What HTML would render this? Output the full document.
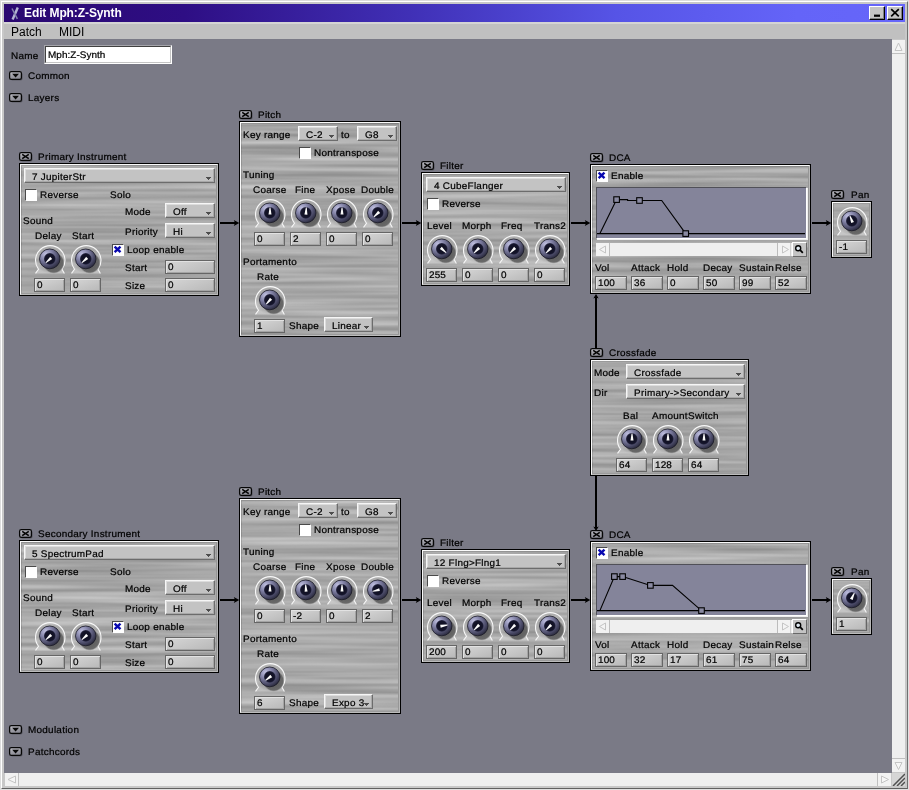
<!DOCTYPE html>
<html><head><meta charset="utf-8"><title>Edit Mph:Z-Synth</title>
<style>
html,body{margin:0;padding:0}
body{width:909px;height:790px;overflow:hidden;background:#c8c8c8;position:relative;font-family:"Liberation Sans",sans-serif;font-size:9.5px;color:#000}
#win{position:absolute;left:0;top:0;width:909px;height:790px;background:#c8c8c8;overflow:hidden}
#win:before{content:"";position:absolute;left:0;top:0;right:0;bottom:0;box-sizing:border-box;border:1px solid;border-color:#dcdcdc #e0e0e0 #e0e0e0 #dcdcdc}
#win:after{content:"";position:absolute;left:1px;top:1px;right:1px;bottom:1px;box-sizing:border-box;border:1px solid;border-color:#fff #707070 #606060 #fff}
#title{position:absolute;left:4px;top:4px;width:901px;height:18px;background:linear-gradient(90deg,#2a0870 0%,#2e0e84 20%,#4030b6 45%,#5654e6 68%,#6464f8 88%,#6666fa 100%)}
#title b{position:absolute;left:20px;top:2px;letter-spacing:-0.1px;font-size:12px;line-height:14px;color:#fff;white-space:nowrap}
.wb{position:absolute;top:2px;width:16px;height:14px;background:#c4c4c4;border:1px solid;border-color:#fff #000 #000 #fff;box-sizing:border-box;box-shadow:inset -1px -1px 0 #808080}
.wb svg{position:absolute;left:0;top:0}
#menu{position:absolute;left:4px;top:22px;width:901px;height:17px;background:#c0c0c0;border-top:2px solid #d4d4d4;box-sizing:border-box;font-size:12px}
#menu span{position:absolute;top:1px;line-height:14px}
#cv{position:absolute;left:4px;top:39px;width:888px;height:734px;background:#7a7a86}
#root{position:absolute;left:0;top:0;will-change:transform}
.t{margin-left:-0.6px}
#title b,#menu span{will-change:transform}
.t,.dd span,.fd span,#name span{position:absolute;white-space:nowrap;line-height:12px;font-size:9.5px;transform:scaleX(1.045);transform-origin:0 50%;letter-spacing:0.25px;text-rendering:geometricPrecision;-webkit-text-stroke:0.22px #000}
.xi,.kn,.ar{position:absolute;overflow:visible}
.pn{position:absolute;box-sizing:border-box;border:1px solid #000}
.pn:before{content:"";position:absolute;left:0;top:0;right:0;bottom:0;border:1px solid;border-color:#fafafa #b8b8b8 #bcbcbc #fafafa}
.pn:after{content:"";position:absolute;left:1px;top:1px;right:1px;bottom:1px;border:1px solid;border-color:rgba(0,0,0,.13) #969696 #9a9a9a rgba(0,0,0,.13)}
.dd{position:absolute;box-sizing:border-box;background:#c3c3c3;border:1px solid;border-color:#f6f6f6 #6c6c6c #6c6c6c #f6f6f6;box-shadow:inset -1px -1px 0 #a8a8a8,inset 1px 1px 0 #dcdcdc}
.dd span{top:3px}
.da{position:absolute;right:3px;bottom:2px}
.fd{position:absolute;box-sizing:border-box;background:linear-gradient(160deg,#d6d6d6,#c4c4c4 60%,#b8b8b8);border:1px solid #666;box-shadow:inset 1px 1px 0 #e2e2e2,inset -1px -1px 0 #a4a4a4}
.fd span{left:1.5px;top:1px;letter-spacing:0.1px}
.cb{position:absolute;box-sizing:border-box;width:12px;height:12px;background:#fff;border:1px solid;border-color:#4a4a4a #fff #fff #4a4a4a}
.cb svg{position:absolute;left:-1px;top:-1px}
.env{position:absolute;box-sizing:border-box;background:#84849a;border:1px solid;border-color:#505058 #fff #fff #505058;box-shadow:1px 1px 0 #f0f0f0}
.hs{position:absolute;height:13px;background:#efefef}
.sb{position:absolute;top:0;width:14px;height:13px;background:#f2f2f2;box-sizing:border-box}
.sb svg{position:absolute;left:0;top:0}
.sb.l{left:0;border-right:1px solid #bcbcbc} .sb.r{right:16px;border-left:1px solid #bcbcbc;border-right:1px solid #d0d0d0}
.zb{position:absolute;right:0px;top:-1px;width:15px;height:15px;box-sizing:border-box;background:#c4c4c4;border:1px solid;border-color:#fff #686868 #686868 #fff}
.zb svg{position:absolute;left:0px;top:0px}
#vs{position:absolute;left:892px;top:40px;width:13px;height:732px;background:#efefef}
#hsb{position:absolute;left:5px;top:773px;width:886px;height:13px;background:#efefef}
.sa{position:absolute;width:14px;height:14px;background:#f2f2f2;box-sizing:border-box}
.sa svg{position:absolute;left:0;top:0}
#vs .sa{width:13px} #hsb .sa{height:13px}
#grip{position:absolute;left:892px;top:773px;width:13px;height:13px;background:#d6d6d6}
#name{position:absolute;left:44px;top:45px;width:128px;height:19px;box-sizing:border-box;background:#fff;border:2px solid;border-color:#404040 #c4c4c4 #c4c4c4 #404040}
#name:before{content:"";position:absolute;left:-2px;top:-2px;right:-2px;bottom:-2px;border:1px solid;border-color:#a4a4aa #fff #fff #a4a4aa}
#name span{left:1.9px;top:3px;letter-spacing:0.05px}
</style></head><body>
<svg width="0" height="0" style="position:absolute"><defs>
<radialGradient id="kb" cx="0.3" cy="0.26" r="0.85"><stop offset="0" stop-color="#c0c0e0"/><stop offset="0.35" stop-color="#8686aa"/><stop offset="0.75" stop-color="#464662"/><stop offset="1" stop-color="#222232"/></radialGradient>
<radialGradient id="kc" cx="0.5" cy="0.5" r="0.5"><stop offset="0" stop-color="#0c0c1c"/><stop offset="0.8" stop-color="#14142a"/><stop offset="1" stop-color="#2c2c46"/></radialGradient>
<radialGradient id="ks" cx="0.5" cy="0.5" r="0.5"><stop offset="0" stop-color="#585858" stop-opacity="1"/><stop offset="0.86" stop-color="#646464" stop-opacity="0.95"/><stop offset="1" stop-color="#808080" stop-opacity="0"/></radialGradient>
<radialGradient id="kr" cx="0.5" cy="0.45" r="0.55"><stop offset="0" stop-color="#999" stop-opacity="0.4"/><stop offset="0.7" stop-color="#b0b0b0" stop-opacity="0.3"/><stop offset="1" stop-color="#d4d4d4" stop-opacity="0.6"/></radialGradient>
<filter id="tex" x="0" y="0" width="100%" height="100%" color-interpolation-filters="sRGB"><feTurbulence type="fractalNoise" baseFrequency="0.005 0.19" numOctaves="2" seed="7" result="n"/><feColorMatrix in="n" type="matrix" values="0.3 0 0 0 0.515  0.3 0 0 0 0.515  0.3 0 0 0 0.515  0 0 0 0 1"/></filter>
<linearGradient id="ib" x1="0" y1="0" x2="0.4" y2="1"><stop offset="0" stop-color="#c4c4cc"/><stop offset="0.5" stop-color="#a0a0a8"/><stop offset="1" stop-color="#8c8c96"/></linearGradient>
</defs></svg>
<div id="win">
<div id="title"><svg style="position:absolute;left:5px;top:3px" width="12" height="13" viewBox="0 0 12 13"><path d="M8.8 0.5 L3.6 12.5" stroke="#b4b4d4" stroke-width="2.4"/><path d="M3 1.5 L8.4 11.8" stroke="#8484ac" stroke-width="1.5"/></svg><b>Edit Mph:Z-Synth</b>
<div class="wb" style="left:865px"><svg width="14" height="12" viewBox="0 0 14 12"><rect x="4" y="7.6" width="6" height="2.2" fill="#000"/></svg></div>
<div class="wb" style="left:883px"><svg width="14" height="12" viewBox="0 0 14 12"><path d="M3.2 2.2 L10.8 9.4 M10.8 2.2 L3.2 9.4" stroke="#000" stroke-width="1.7"/></svg></div>
</div>
<div id="menu"><span style="left:7px">Patch</span><span style="left:55px">MIDI</span></div>
<div id="cv"></div>
<div id="root">
<div class="t" style="left:11.8px;top:51px">Name</div>
<div id="name"><span>Mph:Z-Synth</span></div>
<svg style="position:absolute;left:0;top:0" width="909" height="790" viewBox="0 0 909 790"><rect x="19" y="163" width="200" height="133" fill="#aaa" filter="url(#tex)"/><rect x="239" y="121" width="162" height="216" fill="#aaa" filter="url(#tex)"/><rect x="421" y="172" width="149" height="114" fill="#aaa" filter="url(#tex)"/><rect x="590" y="164" width="221" height="130" fill="#aaa" filter="url(#tex)"/><rect x="831" y="201" width="41" height="57" fill="#aaa" filter="url(#tex)"/><rect x="19" y="540" width="200" height="133" fill="#aaa" filter="url(#tex)"/><rect x="239" y="498" width="162" height="216" fill="#aaa" filter="url(#tex)"/><rect x="421" y="549" width="149" height="114" fill="#aaa" filter="url(#tex)"/><rect x="590" y="541" width="221" height="130" fill="#aaa" filter="url(#tex)"/><rect x="831" y="578" width="41" height="57" fill="#aaa" filter="url(#tex)"/><rect x="590" y="359" width="159" height="117" fill="#aaa" filter="url(#tex)"/></svg>
<svg class="xi" style="left:9px;top:71px" width="15" height="11" viewBox="0 0 15 11"><rect x="1.6" y="1.6" width="12" height="8" rx="1.8" fill="#5c5c66"/><rect x="0.6" y="0.6" width="11.8" height="7.8" rx="1.7" fill="url(#ib)" stroke="#060606" stroke-width="1.25"/><path d="M3.2 2.7 L10 2.7 L6.6 6.4 Z" fill="#080808"/></svg>
<div class="t" style="left:28.6px;top:71px;">Common</div>
<svg class="xi" style="left:9px;top:93px" width="15" height="11" viewBox="0 0 15 11"><rect x="1.6" y="1.6" width="12" height="8" rx="1.8" fill="#5c5c66"/><rect x="0.6" y="0.6" width="11.8" height="7.8" rx="1.7" fill="url(#ib)" stroke="#060606" stroke-width="1.25"/><path d="M3.2 2.7 L10 2.7 L6.6 6.4 Z" fill="#080808"/></svg>
<div class="t" style="left:28.6px;top:93px;">Layers</div>
<svg class="xi" style="left:9px;top:725px" width="15" height="11" viewBox="0 0 15 11"><rect x="1.6" y="1.6" width="12" height="8" rx="1.8" fill="#5c5c66"/><rect x="0.6" y="0.6" width="11.8" height="7.8" rx="1.7" fill="url(#ib)" stroke="#060606" stroke-width="1.25"/><path d="M3.2 2.7 L10 2.7 L6.6 6.4 Z" fill="#080808"/></svg>
<div class="t" style="left:28.6px;top:725px;">Modulation</div>
<svg class="xi" style="left:9px;top:747px" width="15" height="11" viewBox="0 0 15 11"><rect x="1.6" y="1.6" width="12" height="8" rx="1.8" fill="#5c5c66"/><rect x="0.6" y="0.6" width="11.8" height="7.8" rx="1.7" fill="url(#ib)" stroke="#060606" stroke-width="1.25"/><path d="M3.2 2.7 L10 2.7 L6.6 6.4 Z" fill="#080808"/></svg>
<div class="t" style="left:28.6px;top:747px;">Patchcords</div>
<svg class="ar" style="left:592px;top:294px" width="8" height="55" viewBox="0 0 8 55"><rect x="3" y="3" width="2" height="52" fill="#000"/><path d="M4 0 L1.3 4.4 L4 3.4 L6.7 4.4 Z" fill="#000"/></svg>
<svg class="ar" style="left:592px;top:476px" width="8" height="55" viewBox="0 0 8 55"><rect x="3" y="0" width="2" height="52" fill="#000"/><path d="M4 55 L1.3 50.6 L4 51.6 L6.7 50.6 Z" fill="#000"/></svg>
<svg class="xi" style="left:19px;top:152px" width="15" height="11" viewBox="0 0 15 11"><rect x="1.6" y="1.6" width="12" height="8" rx="1.8" fill="#5c5c66"/><rect x="0.6" y="0.6" width="11.8" height="7.8" rx="1.7" fill="url(#ib)" stroke="#060606" stroke-width="1.25"/><path d="M3.2 2.4 L9.8 6.6 M9.8 2.4 L3.2 6.6" stroke="#060606" stroke-width="1.65" fill="none"/></svg>
<div class="t" style="left:38.5px;top:152px;">Primary Instrument</div>
<div class="pn" style="left:19px;top:163px;width:200px;height:133px"></div>
<div class="dd" style="left:24px;top:168px;width:191px;height:15px"><span style="left:6.6px">7 JupiterStr</span><svg class="da" width="5" height="3" viewBox="0 0 5 3"><path d="M0 0h5v1h-1v1h-1v1h-1v-1h-1v-1h-1z" fill="#4e4e4e"/></svg></div>
<div class="cb" style="left:25px;top:189px"></div>
<div class="t" style="left:40.8px;top:190px;">Reverse</div>
<div class="t" style="left:110.6px;top:190px;">Solo</div>
<div class="t" style="left:125.3px;top:207px;">Mode</div>
<div class="dd" style="left:165px;top:203px;width:50px;height:15px"><span style="left:6.6px">Off</span><svg class="da" width="5" height="3" viewBox="0 0 5 3"><path d="M0 0h5v1h-1v1h-1v1h-1v-1h-1v-1h-1z" fill="#4e4e4e"/></svg></div>
<div class="t" style="left:125.3px;top:227px;">Priority</div>
<div class="dd" style="left:165px;top:223px;width:50px;height:15px"><span style="left:6.6px">Hi</span><svg class="da" width="5" height="3" viewBox="0 0 5 3"><path d="M0 0h5v1h-1v1h-1v1h-1v-1h-1v-1h-1z" fill="#4e4e4e"/></svg></div>
<div class="cb" style="left:112px;top:244px"><svg width="12" height="12" viewBox="0 0 12 12"><path d="M2.6 2.6 L8.5 8.1 M8.5 2.6 L2.6 8.1" stroke="#0808b0" stroke-width="2.4" fill="none"/></svg></div>
<div class="t" style="left:127.8px;top:245px;">Loop enable</div>
<div class="t" style="left:125.3px;top:263px;">Start</div>
<div class="fd" style="left:165px;top:260px;width:50px;height:14px"><span>0</span></div>
<div class="t" style="left:125.3px;top:281px;">Size</div>
<div class="fd" style="left:165px;top:278px;width:50px;height:14px"><span>0</span></div>
<div class="t" style="left:23.8px;top:216px;">Sound</div>
<div class="t" style="left:35.8px;top:231px;">Delay</div>
<div class="t" style="left:73px;top:231px;">Start</div>
<svg class="kn" style="left:32.5px;top:243.6px" width="34" height="32" viewBox="-17 -15 34 32"><path d="M-14.5 14.4 L-11.5 10.3 A14.75 14.75 0 1 1 12.0 10.3 L14.4 14.4" fill="url(#kr)"/><path d="M-14.5 14.4 L-11.5 10.3 A14.75 14.75 0 1 1 12.0 10.3 L14.4 14.4" fill="none" stroke="#f8f8f8" stroke-width="1.05"/><circle cx="3.7" cy="3.9" r="10.8" fill="url(#ks)"/><ellipse cx="-0.25" cy="-0.1" rx="10.25" ry="9.9" fill="url(#kb)" stroke="#181824" stroke-width="0.8"/><circle cx="-0.2" cy="-0.1" r="5.8" fill="url(#kc)"/><path d="M-1.5 1.6 L1.5 1.6 L0.45 -5.6 L-0.45 -5.6 Z" fill="#fafafa" transform="rotate(-132)"/></svg>
<svg class="kn" style="left:68.5px;top:243.6px" width="34" height="32" viewBox="-17 -15 34 32"><path d="M-14.5 14.4 L-11.5 10.3 A14.75 14.75 0 1 1 12.0 10.3 L14.4 14.4" fill="url(#kr)"/><path d="M-14.5 14.4 L-11.5 10.3 A14.75 14.75 0 1 1 12.0 10.3 L14.4 14.4" fill="none" stroke="#f8f8f8" stroke-width="1.05"/><circle cx="3.7" cy="3.9" r="10.8" fill="url(#ks)"/><ellipse cx="-0.25" cy="-0.1" rx="10.25" ry="9.9" fill="url(#kb)" stroke="#181824" stroke-width="0.8"/><circle cx="-0.2" cy="-0.1" r="5.8" fill="url(#kc)"/><path d="M-1.5 1.6 L1.5 1.6 L0.45 -5.6 L-0.45 -5.6 Z" fill="#fafafa" transform="rotate(-132)"/></svg>
<div class="fd" style="left:34px;top:278px;width:31px;height:14px"><span>0</span></div>
<div class="fd" style="left:70px;top:278px;width:31px;height:14px"><span>0</span></div>
<svg class="ar" style="left:220px;top:219px" width="19" height="8" viewBox="0 0 19 8"><rect x="0" y="3" width="16" height="2" fill="#000"/><path d="M19.3 4 L13.8 1.1 L15 4 L13.8 6.9 Z" fill="#000"/></svg>
<svg class="xi" style="left:239px;top:110px" width="15" height="11" viewBox="0 0 15 11"><rect x="1.6" y="1.6" width="12" height="8" rx="1.8" fill="#5c5c66"/><rect x="0.6" y="0.6" width="11.8" height="7.8" rx="1.7" fill="url(#ib)" stroke="#060606" stroke-width="1.25"/><path d="M3.2 2.4 L9.8 6.6 M9.8 2.4 L3.2 6.6" stroke="#060606" stroke-width="1.65" fill="none"/></svg>
<div class="t" style="left:258.5px;top:110px;">Pitch</div>
<div class="pn" style="left:239px;top:121px;width:162px;height:216px"></div>
<div class="t" style="left:243.3px;top:130px;">Key range</div>
<div class="dd" style="left:298px;top:126px;width:40px;height:15px"><span style="left:6.6px">C-2</span><svg class="da" width="5" height="3" viewBox="0 0 5 3"><path d="M0 0h5v1h-1v1h-1v1h-1v-1h-1v-1h-1z" fill="#4e4e4e"/></svg></div>
<div class="t" style="left:341.6px;top:130px;">to</div>
<div class="dd" style="left:357px;top:126px;width:40px;height:15px"><span style="left:6.6px">G8</span><svg class="da" width="5" height="3" viewBox="0 0 5 3"><path d="M0 0h5v1h-1v1h-1v1h-1v-1h-1v-1h-1z" fill="#4e4e4e"/></svg></div>
<div class="cb" style="left:299px;top:147px"></div>
<div class="t" style="left:314.3px;top:148px;">Nontranspose</div>
<div class="t" style="left:243.3px;top:170px;">Tuning</div>
<div class="t" style="left:253.9px;top:185px;">Coarse</div>
<div class="t" style="left:295.7px;top:185px;">Fine</div>
<div class="t" style="left:326.1px;top:185px;">Xpose</div>
<div class="t" style="left:361.7px;top:185px;">Double</div>
<svg class="kn" style="left:252.5px;top:197.6px" width="34" height="32" viewBox="-17 -15 34 32"><path d="M-14.5 14.4 L-11.5 10.3 A14.75 14.75 0 1 1 12.0 10.3 L14.4 14.4" fill="url(#kr)"/><path d="M-14.5 14.4 L-11.5 10.3 A14.75 14.75 0 1 1 12.0 10.3 L14.4 14.4" fill="none" stroke="#f8f8f8" stroke-width="1.05"/><circle cx="3.7" cy="3.9" r="10.8" fill="url(#ks)"/><ellipse cx="-0.25" cy="-0.1" rx="10.25" ry="9.9" fill="url(#kb)" stroke="#181824" stroke-width="0.8"/><circle cx="-0.2" cy="-0.1" r="5.8" fill="url(#kc)"/><path d="M-1.5 1.6 L1.5 1.6 L0.45 -5.6 L-0.45 -5.6 Z" fill="#fafafa" transform="rotate(0)"/></svg>
<div class="fd" style="left:254px;top:232px;width:31px;height:14px"><span>0</span></div>
<svg class="kn" style="left:288.5px;top:197.6px" width="34" height="32" viewBox="-17 -15 34 32"><path d="M-14.5 14.4 L-11.5 10.3 A14.75 14.75 0 1 1 12.0 10.3 L14.4 14.4" fill="url(#kr)"/><path d="M-14.5 14.4 L-11.5 10.3 A14.75 14.75 0 1 1 12.0 10.3 L14.4 14.4" fill="none" stroke="#f8f8f8" stroke-width="1.05"/><circle cx="3.7" cy="3.9" r="10.8" fill="url(#ks)"/><ellipse cx="-0.25" cy="-0.1" rx="10.25" ry="9.9" fill="url(#kb)" stroke="#181824" stroke-width="0.8"/><circle cx="-0.2" cy="-0.1" r="5.8" fill="url(#kc)"/><path d="M-1.5 1.6 L1.5 1.6 L0.45 -5.6 L-0.45 -5.6 Z" fill="#fafafa" transform="rotate(3)"/></svg>
<div class="fd" style="left:290px;top:232px;width:31px;height:14px"><span>2</span></div>
<svg class="kn" style="left:324.5px;top:197.6px" width="34" height="32" viewBox="-17 -15 34 32"><path d="M-14.5 14.4 L-11.5 10.3 A14.75 14.75 0 1 1 12.0 10.3 L14.4 14.4" fill="url(#kr)"/><path d="M-14.5 14.4 L-11.5 10.3 A14.75 14.75 0 1 1 12.0 10.3 L14.4 14.4" fill="none" stroke="#f8f8f8" stroke-width="1.05"/><circle cx="3.7" cy="3.9" r="10.8" fill="url(#ks)"/><ellipse cx="-0.25" cy="-0.1" rx="10.25" ry="9.9" fill="url(#kb)" stroke="#181824" stroke-width="0.8"/><circle cx="-0.2" cy="-0.1" r="5.8" fill="url(#kc)"/><path d="M-1.5 1.6 L1.5 1.6 L0.45 -5.6 L-0.45 -5.6 Z" fill="#fafafa" transform="rotate(0)"/></svg>
<div class="fd" style="left:326px;top:232px;width:31px;height:14px"><span>0</span></div>
<svg class="kn" style="left:360.5px;top:197.6px" width="34" height="32" viewBox="-17 -15 34 32"><path d="M-14.5 14.4 L-11.5 10.3 A14.75 14.75 0 1 1 12.0 10.3 L14.4 14.4" fill="url(#kr)"/><path d="M-14.5 14.4 L-11.5 10.3 A14.75 14.75 0 1 1 12.0 10.3 L14.4 14.4" fill="none" stroke="#f8f8f8" stroke-width="1.05"/><circle cx="3.7" cy="3.9" r="10.8" fill="url(#ks)"/><ellipse cx="-0.25" cy="-0.1" rx="10.25" ry="9.9" fill="url(#kb)" stroke="#181824" stroke-width="0.8"/><circle cx="-0.2" cy="-0.1" r="5.8" fill="url(#kc)"/><path d="M-1.5 1.6 L1.5 1.6 L0.45 -5.6 L-0.45 -5.6 Z" fill="#fafafa" transform="rotate(-133)"/></svg>
<div class="fd" style="left:362px;top:232px;width:31px;height:14px"><span>0</span></div>
<div class="t" style="left:243.3px;top:257px;">Portamento</div>
<div class="t" style="left:257.3px;top:272px;">Rate</div>
<svg class="kn" style="left:252.5px;top:284.6px" width="34" height="32" viewBox="-17 -15 34 32"><path d="M-14.5 14.4 L-11.5 10.3 A14.75 14.75 0 1 1 12.0 10.3 L14.4 14.4" fill="url(#kr)"/><path d="M-14.5 14.4 L-11.5 10.3 A14.75 14.75 0 1 1 12.0 10.3 L14.4 14.4" fill="none" stroke="#f8f8f8" stroke-width="1.05"/><circle cx="3.7" cy="3.9" r="10.8" fill="url(#ks)"/><ellipse cx="-0.25" cy="-0.1" rx="10.25" ry="9.9" fill="url(#kb)" stroke="#181824" stroke-width="0.8"/><circle cx="-0.2" cy="-0.1" r="5.8" fill="url(#kc)"/><path d="M-1.5 1.6 L1.5 1.6 L0.45 -5.6 L-0.45 -5.6 Z" fill="#fafafa" transform="rotate(-138)"/></svg>
<div class="fd" style="left:254px;top:319px;width:31px;height:14px"><span>1</span></div>
<div class="t" style="left:289.5px;top:321px;">Shape</div>
<div class="dd" style="left:324px;top:317px;width:49px;height:15px"><span style="left:6.6px">Linear</span><svg class="da" width="5" height="3" viewBox="0 0 5 3"><path d="M0 0h5v1h-1v1h-1v1h-1v-1h-1v-1h-1z" fill="#4e4e4e"/></svg></div>
<svg class="ar" style="left:402px;top:219px" width="19" height="8" viewBox="0 0 19 8"><rect x="0" y="3" width="16" height="2" fill="#000"/><path d="M19.3 4 L13.8 1.1 L15 4 L13.8 6.9 Z" fill="#000"/></svg>
<svg class="xi" style="left:421px;top:161px" width="15" height="11" viewBox="0 0 15 11"><rect x="1.6" y="1.6" width="12" height="8" rx="1.8" fill="#5c5c66"/><rect x="0.6" y="0.6" width="11.8" height="7.8" rx="1.7" fill="url(#ib)" stroke="#060606" stroke-width="1.25"/><path d="M3.2 2.4 L9.8 6.6 M9.8 2.4 L3.2 6.6" stroke="#060606" stroke-width="1.65" fill="none"/></svg>
<div class="t" style="left:440.7px;top:161px;">Filter</div>
<div class="pn" style="left:421px;top:172px;width:149px;height:114px"></div>
<div class="dd" style="left:426px;top:177px;width:140px;height:15px"><span style="left:6.6px">4 CubeFlanger</span><svg class="da" width="5" height="3" viewBox="0 0 5 3"><path d="M0 0h5v1h-1v1h-1v1h-1v-1h-1v-1h-1z" fill="#4e4e4e"/></svg></div>
<div class="cb" style="left:427px;top:198px"></div>
<div class="t" style="left:442.7px;top:199px;">Reverse</div>
<div class="t" style="left:427.4px;top:221px;">Level</div>
<div class="t" style="left:462.5px;top:221px;">Morph</div>
<div class="t" style="left:501.5px;top:221px;">Freq</div>
<div class="t" style="left:534.2px;top:221px;">Trans2</div>
<svg class="kn" style="left:424.5px;top:233.6px" width="34" height="32" viewBox="-17 -15 34 32"><path d="M-14.5 14.4 L-11.5 10.3 A14.75 14.75 0 1 1 12.0 10.3 L14.4 14.4" fill="url(#kr)"/><path d="M-14.5 14.4 L-11.5 10.3 A14.75 14.75 0 1 1 12.0 10.3 L14.4 14.4" fill="none" stroke="#f8f8f8" stroke-width="1.05"/><circle cx="3.7" cy="3.9" r="10.8" fill="url(#ks)"/><ellipse cx="-0.25" cy="-0.1" rx="10.25" ry="9.9" fill="url(#kb)" stroke="#181824" stroke-width="0.8"/><circle cx="-0.2" cy="-0.1" r="5.8" fill="url(#kc)"/><path d="M-1.5 1.6 L1.5 1.6 L0.45 -5.6 L-0.45 -5.6 Z" fill="#fafafa" transform="rotate(132)"/></svg>
<div class="fd" style="left:426px;top:268px;width:31px;height:14px"><span>255</span></div>
<svg class="kn" style="left:460.5px;top:233.6px" width="34" height="32" viewBox="-17 -15 34 32"><path d="M-14.5 14.4 L-11.5 10.3 A14.75 14.75 0 1 1 12.0 10.3 L14.4 14.4" fill="url(#kr)"/><path d="M-14.5 14.4 L-11.5 10.3 A14.75 14.75 0 1 1 12.0 10.3 L14.4 14.4" fill="none" stroke="#f8f8f8" stroke-width="1.05"/><circle cx="3.7" cy="3.9" r="10.8" fill="url(#ks)"/><ellipse cx="-0.25" cy="-0.1" rx="10.25" ry="9.9" fill="url(#kb)" stroke="#181824" stroke-width="0.8"/><circle cx="-0.2" cy="-0.1" r="5.8" fill="url(#kc)"/><path d="M-1.5 1.6 L1.5 1.6 L0.45 -5.6 L-0.45 -5.6 Z" fill="#fafafa" transform="rotate(-135)"/></svg>
<div class="fd" style="left:462px;top:268px;width:31px;height:14px"><span>0</span></div>
<svg class="kn" style="left:496.5px;top:233.6px" width="34" height="32" viewBox="-17 -15 34 32"><path d="M-14.5 14.4 L-11.5 10.3 A14.75 14.75 0 1 1 12.0 10.3 L14.4 14.4" fill="url(#kr)"/><path d="M-14.5 14.4 L-11.5 10.3 A14.75 14.75 0 1 1 12.0 10.3 L14.4 14.4" fill="none" stroke="#f8f8f8" stroke-width="1.05"/><circle cx="3.7" cy="3.9" r="10.8" fill="url(#ks)"/><ellipse cx="-0.25" cy="-0.1" rx="10.25" ry="9.9" fill="url(#kb)" stroke="#181824" stroke-width="0.8"/><circle cx="-0.2" cy="-0.1" r="5.8" fill="url(#kc)"/><path d="M-1.5 1.6 L1.5 1.6 L0.45 -5.6 L-0.45 -5.6 Z" fill="#fafafa" transform="rotate(-135)"/></svg>
<div class="fd" style="left:498px;top:268px;width:31px;height:14px"><span>0</span></div>
<svg class="kn" style="left:532.5px;top:233.6px" width="34" height="32" viewBox="-17 -15 34 32"><path d="M-14.5 14.4 L-11.5 10.3 A14.75 14.75 0 1 1 12.0 10.3 L14.4 14.4" fill="url(#kr)"/><path d="M-14.5 14.4 L-11.5 10.3 A14.75 14.75 0 1 1 12.0 10.3 L14.4 14.4" fill="none" stroke="#f8f8f8" stroke-width="1.05"/><circle cx="3.7" cy="3.9" r="10.8" fill="url(#ks)"/><ellipse cx="-0.25" cy="-0.1" rx="10.25" ry="9.9" fill="url(#kb)" stroke="#181824" stroke-width="0.8"/><circle cx="-0.2" cy="-0.1" r="5.8" fill="url(#kc)"/><path d="M-1.5 1.6 L1.5 1.6 L0.45 -5.6 L-0.45 -5.6 Z" fill="#fafafa" transform="rotate(-135)"/></svg>
<div class="fd" style="left:534px;top:268px;width:31px;height:14px"><span>0</span></div>
<svg class="ar" style="left:571px;top:219px" width="19" height="8" viewBox="0 0 19 8"><rect x="0" y="3" width="16" height="2" fill="#000"/><path d="M19.3 4 L13.8 1.1 L15 4 L13.8 6.9 Z" fill="#000"/></svg>
<svg class="xi" style="left:590px;top:153px" width="15" height="11" viewBox="0 0 15 11"><rect x="1.6" y="1.6" width="12" height="8" rx="1.8" fill="#5c5c66"/><rect x="0.6" y="0.6" width="11.8" height="7.8" rx="1.7" fill="url(#ib)" stroke="#060606" stroke-width="1.25"/><path d="M3.2 2.4 L9.8 6.6 M9.8 2.4 L3.2 6.6" stroke="#060606" stroke-width="1.65" fill="none"/></svg>
<div class="t" style="left:609.8px;top:153px;">DCA</div>
<div class="pn" style="left:590px;top:164px;width:221px;height:130px"></div>
<div class="cb" style="left:596px;top:170px"><svg width="12" height="12" viewBox="0 0 12 12"><path d="M2.6 2.6 L8.5 8.1 M8.5 2.6 L2.6 8.1" stroke="#0808b0" stroke-width="2.4" fill="none"/></svg></div>
<div class="t" style="left:611.7px;top:171px;">Enable</div>
<div class="env" style="left:596px;top:187px;width:211px;height:52px"><svg width="209" height="50" viewBox="0 0 209 50" style="position:absolute;left:0;top:0"><line x1="0" y1="45.599999999999994" x2="208" y2="45.599999999999994" stroke="#000" stroke-width="1.2"/><polyline points="2.9,45.6 19.6,11.6 30.6,11.6 30.6,12.5 42.5,12.5 64.7,12.5 88.7,45.6" fill="none" stroke="#000" stroke-width="1.1"/><rect x="16.8" y="8.8" width="5.6" height="5.6" fill="#8a8aa2" stroke="#000" stroke-width="1.1"/><rect x="39.7" y="9.7" width="5.6" height="5.6" fill="#8a8aa2" stroke="#000" stroke-width="1.1"/><rect x="85.9" y="42.8" width="5.6" height="5.6" fill="#8a8aa2" stroke="#000" stroke-width="1.1"/></svg></div>
<div class="hs" style="left:596px;top:243px;width:211px"><div class="sb l"><svg width="14" height="13" viewBox="0 0 14 13"><path d="M9.5 3 L3.5 6.5 L9.5 10 Z" fill="#f4f4f4" stroke="#c4c4c4" stroke-width="1"/></svg></div><div class="sb r"><svg width="14" height="13" viewBox="0 0 14 13"><path d="M4.5 3 L10.5 6.5 L4.5 10 Z" fill="#f4f4f4" stroke="#c4c4c4" stroke-width="1"/></svg></div><div class="zb"><svg width="13" height="13" viewBox="0 0 13 13"><circle cx="5.2" cy="5.2" r="2.5" fill="#dfe8f0" stroke="#000" stroke-width="1.4"/><path d="M7.2 7.2 L9.8 9.8" stroke="#000" stroke-width="1.8"/></svg></div></div>
<div class="t" style="left:595.4px;top:263px;">Vol</div>
<div class="fd" style="left:595px;top:276px;width:32px;height:14px"><span>100</span></div>
<div class="t" style="left:631.1999999999999px;top:263px;">Attack</div>
<div class="fd" style="left:631px;top:276px;width:32px;height:14px"><span>36</span></div>
<div class="t" style="left:667.1999999999999px;top:263px;">Hold</div>
<div class="fd" style="left:667px;top:276px;width:32px;height:14px"><span>0</span></div>
<div class="t" style="left:703.1999999999999px;top:263px;">Decay</div>
<div class="fd" style="left:703px;top:276px;width:32px;height:14px"><span>50</span></div>
<div class="t" style="left:739.1999999999999px;top:263px;">Sustain</div>
<div class="fd" style="left:739px;top:276px;width:32px;height:14px"><span>99</span></div>
<div class="t" style="left:775.1999999999999px;top:263px;">Relse</div>
<div class="fd" style="left:775px;top:276px;width:32px;height:14px"><span>52</span></div>
<svg class="ar" style="left:812px;top:219px" width="19" height="8" viewBox="0 0 19 8"><rect x="0" y="3" width="16" height="2" fill="#000"/><path d="M19.3 4 L13.8 1.1 L15 4 L13.8 6.9 Z" fill="#000"/></svg>
<svg class="xi" style="left:831px;top:190px" width="15" height="11" viewBox="0 0 15 11"><rect x="1.6" y="1.6" width="12" height="8" rx="1.8" fill="#5c5c66"/><rect x="0.6" y="0.6" width="11.8" height="7.8" rx="1.7" fill="url(#ib)" stroke="#060606" stroke-width="1.25"/><path d="M3.2 2.4 L9.8 6.6 M9.8 2.4 L3.2 6.6" stroke="#060606" stroke-width="1.65" fill="none"/></svg>
<div class="t" style="left:851.1px;top:190px;">Pan</div>
<div class="pn" style="left:831px;top:201px;width:41px;height:57px"></div>
<svg class="kn" style="left:834.5px;top:205.6px" width="34" height="32" viewBox="-17 -15 34 32"><path d="M-14.5 14.4 L-11.5 10.3 A14.75 14.75 0 1 1 12.0 10.3 L14.4 14.4" fill="url(#kr)"/><path d="M-14.5 14.4 L-11.5 10.3 A14.75 14.75 0 1 1 12.0 10.3 L14.4 14.4" fill="none" stroke="#f8f8f8" stroke-width="1.05"/><circle cx="3.7" cy="3.9" r="10.8" fill="url(#ks)"/><ellipse cx="-0.25" cy="-0.1" rx="10.25" ry="9.9" fill="url(#kb)" stroke="#181824" stroke-width="0.8"/><circle cx="-0.2" cy="-0.1" r="5.8" fill="url(#kc)"/><path d="M-1.5 1.6 L1.5 1.6 L0.45 -5.6 L-0.45 -5.6 Z" fill="#fafafa" transform="rotate(-22)"/></svg>
<div class="fd" style="left:836px;top:240px;width:31px;height:14px"><span>-1</span></div>
<svg class="xi" style="left:19px;top:529px" width="15" height="11" viewBox="0 0 15 11"><rect x="1.6" y="1.6" width="12" height="8" rx="1.8" fill="#5c5c66"/><rect x="0.6" y="0.6" width="11.8" height="7.8" rx="1.7" fill="url(#ib)" stroke="#060606" stroke-width="1.25"/><path d="M3.2 2.4 L9.8 6.6 M9.8 2.4 L3.2 6.6" stroke="#060606" stroke-width="1.65" fill="none"/></svg>
<div class="t" style="left:38.5px;top:529px;">Secondary Instrument</div>
<div class="pn" style="left:19px;top:540px;width:200px;height:133px"></div>
<div class="dd" style="left:24px;top:545px;width:191px;height:15px"><span style="left:6.6px">5 SpectrumPad</span><svg class="da" width="5" height="3" viewBox="0 0 5 3"><path d="M0 0h5v1h-1v1h-1v1h-1v-1h-1v-1h-1z" fill="#4e4e4e"/></svg></div>
<div class="cb" style="left:25px;top:566px"></div>
<div class="t" style="left:40.8px;top:567px;">Reverse</div>
<div class="t" style="left:110.6px;top:567px;">Solo</div>
<div class="t" style="left:125.3px;top:584px;">Mode</div>
<div class="dd" style="left:165px;top:580px;width:50px;height:15px"><span style="left:6.6px">Off</span><svg class="da" width="5" height="3" viewBox="0 0 5 3"><path d="M0 0h5v1h-1v1h-1v1h-1v-1h-1v-1h-1z" fill="#4e4e4e"/></svg></div>
<div class="t" style="left:125.3px;top:604px;">Priority</div>
<div class="dd" style="left:165px;top:600px;width:50px;height:15px"><span style="left:6.6px">Hi</span><svg class="da" width="5" height="3" viewBox="0 0 5 3"><path d="M0 0h5v1h-1v1h-1v1h-1v-1h-1v-1h-1z" fill="#4e4e4e"/></svg></div>
<div class="cb" style="left:112px;top:621px"><svg width="12" height="12" viewBox="0 0 12 12"><path d="M2.6 2.6 L8.5 8.1 M8.5 2.6 L2.6 8.1" stroke="#0808b0" stroke-width="2.4" fill="none"/></svg></div>
<div class="t" style="left:127.8px;top:622px;">Loop enable</div>
<div class="t" style="left:125.3px;top:640px;">Start</div>
<div class="fd" style="left:165px;top:637px;width:50px;height:14px"><span>0</span></div>
<div class="t" style="left:125.3px;top:658px;">Size</div>
<div class="fd" style="left:165px;top:655px;width:50px;height:14px"><span>0</span></div>
<div class="t" style="left:23.8px;top:593px;">Sound</div>
<div class="t" style="left:35.8px;top:608px;">Delay</div>
<div class="t" style="left:73px;top:608px;">Start</div>
<svg class="kn" style="left:32.5px;top:620.5px" width="34" height="32" viewBox="-17 -15 34 32"><path d="M-14.5 14.4 L-11.5 10.3 A14.75 14.75 0 1 1 12.0 10.3 L14.4 14.4" fill="url(#kr)"/><path d="M-14.5 14.4 L-11.5 10.3 A14.75 14.75 0 1 1 12.0 10.3 L14.4 14.4" fill="none" stroke="#f8f8f8" stroke-width="1.05"/><circle cx="3.7" cy="3.9" r="10.8" fill="url(#ks)"/><ellipse cx="-0.25" cy="-0.1" rx="10.25" ry="9.9" fill="url(#kb)" stroke="#181824" stroke-width="0.8"/><circle cx="-0.2" cy="-0.1" r="5.8" fill="url(#kc)"/><path d="M-1.5 1.6 L1.5 1.6 L0.45 -5.6 L-0.45 -5.6 Z" fill="#fafafa" transform="rotate(-132)"/></svg>
<svg class="kn" style="left:68.5px;top:620.5px" width="34" height="32" viewBox="-17 -15 34 32"><path d="M-14.5 14.4 L-11.5 10.3 A14.75 14.75 0 1 1 12.0 10.3 L14.4 14.4" fill="url(#kr)"/><path d="M-14.5 14.4 L-11.5 10.3 A14.75 14.75 0 1 1 12.0 10.3 L14.4 14.4" fill="none" stroke="#f8f8f8" stroke-width="1.05"/><circle cx="3.7" cy="3.9" r="10.8" fill="url(#ks)"/><ellipse cx="-0.25" cy="-0.1" rx="10.25" ry="9.9" fill="url(#kb)" stroke="#181824" stroke-width="0.8"/><circle cx="-0.2" cy="-0.1" r="5.8" fill="url(#kc)"/><path d="M-1.5 1.6 L1.5 1.6 L0.45 -5.6 L-0.45 -5.6 Z" fill="#fafafa" transform="rotate(-132)"/></svg>
<div class="fd" style="left:34px;top:655px;width:31px;height:14px"><span>0</span></div>
<div class="fd" style="left:70px;top:655px;width:31px;height:14px"><span>0</span></div>
<svg class="ar" style="left:220px;top:596px" width="19" height="8" viewBox="0 0 19 8"><rect x="0" y="3" width="16" height="2" fill="#000"/><path d="M19.3 4 L13.8 1.1 L15 4 L13.8 6.9 Z" fill="#000"/></svg>
<svg class="xi" style="left:239px;top:487px" width="15" height="11" viewBox="0 0 15 11"><rect x="1.6" y="1.6" width="12" height="8" rx="1.8" fill="#5c5c66"/><rect x="0.6" y="0.6" width="11.8" height="7.8" rx="1.7" fill="url(#ib)" stroke="#060606" stroke-width="1.25"/><path d="M3.2 2.4 L9.8 6.6 M9.8 2.4 L3.2 6.6" stroke="#060606" stroke-width="1.65" fill="none"/></svg>
<div class="t" style="left:258.5px;top:487px;">Pitch</div>
<div class="pn" style="left:239px;top:498px;width:162px;height:216px"></div>
<div class="t" style="left:243.3px;top:507px;">Key range</div>
<div class="dd" style="left:298px;top:503px;width:40px;height:15px"><span style="left:6.6px">C-2</span><svg class="da" width="5" height="3" viewBox="0 0 5 3"><path d="M0 0h5v1h-1v1h-1v1h-1v-1h-1v-1h-1z" fill="#4e4e4e"/></svg></div>
<div class="t" style="left:341.6px;top:507px;">to</div>
<div class="dd" style="left:357px;top:503px;width:40px;height:15px"><span style="left:6.6px">G8</span><svg class="da" width="5" height="3" viewBox="0 0 5 3"><path d="M0 0h5v1h-1v1h-1v1h-1v-1h-1v-1h-1z" fill="#4e4e4e"/></svg></div>
<div class="cb" style="left:299px;top:524px"></div>
<div class="t" style="left:314.3px;top:525px;">Nontranspose</div>
<div class="t" style="left:243.3px;top:547px;">Tuning</div>
<div class="t" style="left:253.9px;top:562px;">Coarse</div>
<div class="t" style="left:295.7px;top:562px;">Fine</div>
<div class="t" style="left:326.1px;top:562px;">Xpose</div>
<div class="t" style="left:361.7px;top:562px;">Double</div>
<svg class="kn" style="left:252.5px;top:574.5px" width="34" height="32" viewBox="-17 -15 34 32"><path d="M-14.5 14.4 L-11.5 10.3 A14.75 14.75 0 1 1 12.0 10.3 L14.4 14.4" fill="url(#kr)"/><path d="M-14.5 14.4 L-11.5 10.3 A14.75 14.75 0 1 1 12.0 10.3 L14.4 14.4" fill="none" stroke="#f8f8f8" stroke-width="1.05"/><circle cx="3.7" cy="3.9" r="10.8" fill="url(#ks)"/><ellipse cx="-0.25" cy="-0.1" rx="10.25" ry="9.9" fill="url(#kb)" stroke="#181824" stroke-width="0.8"/><circle cx="-0.2" cy="-0.1" r="5.8" fill="url(#kc)"/><path d="M-1.5 1.6 L1.5 1.6 L0.45 -5.6 L-0.45 -5.6 Z" fill="#fafafa" transform="rotate(0)"/></svg>
<div class="fd" style="left:254px;top:609px;width:31px;height:14px"><span>0</span></div>
<svg class="kn" style="left:288.5px;top:574.5px" width="34" height="32" viewBox="-17 -15 34 32"><path d="M-14.5 14.4 L-11.5 10.3 A14.75 14.75 0 1 1 12.0 10.3 L14.4 14.4" fill="url(#kr)"/><path d="M-14.5 14.4 L-11.5 10.3 A14.75 14.75 0 1 1 12.0 10.3 L14.4 14.4" fill="none" stroke="#f8f8f8" stroke-width="1.05"/><circle cx="3.7" cy="3.9" r="10.8" fill="url(#ks)"/><ellipse cx="-0.25" cy="-0.1" rx="10.25" ry="9.9" fill="url(#kb)" stroke="#181824" stroke-width="0.8"/><circle cx="-0.2" cy="-0.1" r="5.8" fill="url(#kc)"/><path d="M-1.5 1.6 L1.5 1.6 L0.45 -5.6 L-0.45 -5.6 Z" fill="#fafafa" transform="rotate(-4)"/></svg>
<div class="fd" style="left:290px;top:609px;width:31px;height:14px"><span>-2</span></div>
<svg class="kn" style="left:324.5px;top:574.5px" width="34" height="32" viewBox="-17 -15 34 32"><path d="M-14.5 14.4 L-11.5 10.3 A14.75 14.75 0 1 1 12.0 10.3 L14.4 14.4" fill="url(#kr)"/><path d="M-14.5 14.4 L-11.5 10.3 A14.75 14.75 0 1 1 12.0 10.3 L14.4 14.4" fill="none" stroke="#f8f8f8" stroke-width="1.05"/><circle cx="3.7" cy="3.9" r="10.8" fill="url(#ks)"/><ellipse cx="-0.25" cy="-0.1" rx="10.25" ry="9.9" fill="url(#kb)" stroke="#181824" stroke-width="0.8"/><circle cx="-0.2" cy="-0.1" r="5.8" fill="url(#kc)"/><path d="M-1.5 1.6 L1.5 1.6 L0.45 -5.6 L-0.45 -5.6 Z" fill="#fafafa" transform="rotate(0)"/></svg>
<div class="fd" style="left:326px;top:609px;width:31px;height:14px"><span>0</span></div>
<svg class="kn" style="left:360.5px;top:574.5px" width="34" height="32" viewBox="-17 -15 34 32"><path d="M-14.5 14.4 L-11.5 10.3 A14.75 14.75 0 1 1 12.0 10.3 L14.4 14.4" fill="url(#kr)"/><path d="M-14.5 14.4 L-11.5 10.3 A14.75 14.75 0 1 1 12.0 10.3 L14.4 14.4" fill="none" stroke="#f8f8f8" stroke-width="1.05"/><circle cx="3.7" cy="3.9" r="10.8" fill="url(#ks)"/><ellipse cx="-0.25" cy="-0.1" rx="10.25" ry="9.9" fill="url(#kb)" stroke="#181824" stroke-width="0.8"/><circle cx="-0.2" cy="-0.1" r="5.8" fill="url(#kc)"/><path d="M-1.5 1.6 L1.5 1.6 L0.45 -5.6 L-0.45 -5.6 Z" fill="#fafafa" transform="rotate(-104)"/></svg>
<div class="fd" style="left:362px;top:609px;width:31px;height:14px"><span>2</span></div>
<div class="t" style="left:243.3px;top:634px;">Portamento</div>
<div class="t" style="left:257.3px;top:649px;">Rate</div>
<svg class="kn" style="left:252.5px;top:661.5px" width="34" height="32" viewBox="-17 -15 34 32"><path d="M-14.5 14.4 L-11.5 10.3 A14.75 14.75 0 1 1 12.0 10.3 L14.4 14.4" fill="url(#kr)"/><path d="M-14.5 14.4 L-11.5 10.3 A14.75 14.75 0 1 1 12.0 10.3 L14.4 14.4" fill="none" stroke="#f8f8f8" stroke-width="1.05"/><circle cx="3.7" cy="3.9" r="10.8" fill="url(#ks)"/><ellipse cx="-0.25" cy="-0.1" rx="10.25" ry="9.9" fill="url(#kb)" stroke="#181824" stroke-width="0.8"/><circle cx="-0.2" cy="-0.1" r="5.8" fill="url(#kc)"/><path d="M-1.5 1.6 L1.5 1.6 L0.45 -5.6 L-0.45 -5.6 Z" fill="#fafafa" transform="rotate(-127)"/></svg>
<div class="fd" style="left:254px;top:696px;width:31px;height:14px"><span>6</span></div>
<div class="t" style="left:289.5px;top:698px;">Shape</div>
<div class="dd" style="left:324px;top:694px;width:49px;height:15px"><span style="left:6.6px">Expo 3</span><svg class="da" width="5" height="3" viewBox="0 0 5 3"><path d="M0 0h5v1h-1v1h-1v1h-1v-1h-1v-1h-1z" fill="#4e4e4e"/></svg></div>
<svg class="ar" style="left:402px;top:596px" width="19" height="8" viewBox="0 0 19 8"><rect x="0" y="3" width="16" height="2" fill="#000"/><path d="M19.3 4 L13.8 1.1 L15 4 L13.8 6.9 Z" fill="#000"/></svg>
<svg class="xi" style="left:421px;top:538px" width="15" height="11" viewBox="0 0 15 11"><rect x="1.6" y="1.6" width="12" height="8" rx="1.8" fill="#5c5c66"/><rect x="0.6" y="0.6" width="11.8" height="7.8" rx="1.7" fill="url(#ib)" stroke="#060606" stroke-width="1.25"/><path d="M3.2 2.4 L9.8 6.6 M9.8 2.4 L3.2 6.6" stroke="#060606" stroke-width="1.65" fill="none"/></svg>
<div class="t" style="left:440.7px;top:538px;">Filter</div>
<div class="pn" style="left:421px;top:549px;width:149px;height:114px"></div>
<div class="dd" style="left:426px;top:554px;width:140px;height:15px"><span style="left:6.6px">12 Flng&gt;Flng1</span><svg class="da" width="5" height="3" viewBox="0 0 5 3"><path d="M0 0h5v1h-1v1h-1v1h-1v-1h-1v-1h-1z" fill="#4e4e4e"/></svg></div>
<div class="cb" style="left:427px;top:575px"></div>
<div class="t" style="left:442.7px;top:576px;">Reverse</div>
<div class="t" style="left:427.4px;top:598px;">Level</div>
<div class="t" style="left:462.5px;top:598px;">Morph</div>
<div class="t" style="left:501.5px;top:598px;">Freq</div>
<div class="t" style="left:534.2px;top:598px;">Trans2</div>
<svg class="kn" style="left:424.5px;top:610.5px" width="34" height="32" viewBox="-17 -15 34 32"><path d="M-14.5 14.4 L-11.5 10.3 A14.75 14.75 0 1 1 12.0 10.3 L14.4 14.4" fill="url(#kr)"/><path d="M-14.5 14.4 L-11.5 10.3 A14.75 14.75 0 1 1 12.0 10.3 L14.4 14.4" fill="none" stroke="#f8f8f8" stroke-width="1.05"/><circle cx="3.7" cy="3.9" r="10.8" fill="url(#ks)"/><ellipse cx="-0.25" cy="-0.1" rx="10.25" ry="9.9" fill="url(#kb)" stroke="#181824" stroke-width="0.8"/><circle cx="-0.2" cy="-0.1" r="5.8" fill="url(#kc)"/><path d="M-1.5 1.6 L1.5 1.6 L0.45 -5.6 L-0.45 -5.6 Z" fill="#fafafa" transform="rotate(80)"/></svg>
<div class="fd" style="left:426px;top:645px;width:31px;height:14px"><span>200</span></div>
<svg class="kn" style="left:460.5px;top:610.5px" width="34" height="32" viewBox="-17 -15 34 32"><path d="M-14.5 14.4 L-11.5 10.3 A14.75 14.75 0 1 1 12.0 10.3 L14.4 14.4" fill="url(#kr)"/><path d="M-14.5 14.4 L-11.5 10.3 A14.75 14.75 0 1 1 12.0 10.3 L14.4 14.4" fill="none" stroke="#f8f8f8" stroke-width="1.05"/><circle cx="3.7" cy="3.9" r="10.8" fill="url(#ks)"/><ellipse cx="-0.25" cy="-0.1" rx="10.25" ry="9.9" fill="url(#kb)" stroke="#181824" stroke-width="0.8"/><circle cx="-0.2" cy="-0.1" r="5.8" fill="url(#kc)"/><path d="M-1.5 1.6 L1.5 1.6 L0.45 -5.6 L-0.45 -5.6 Z" fill="#fafafa" transform="rotate(-135)"/></svg>
<div class="fd" style="left:462px;top:645px;width:31px;height:14px"><span>0</span></div>
<svg class="kn" style="left:496.5px;top:610.5px" width="34" height="32" viewBox="-17 -15 34 32"><path d="M-14.5 14.4 L-11.5 10.3 A14.75 14.75 0 1 1 12.0 10.3 L14.4 14.4" fill="url(#kr)"/><path d="M-14.5 14.4 L-11.5 10.3 A14.75 14.75 0 1 1 12.0 10.3 L14.4 14.4" fill="none" stroke="#f8f8f8" stroke-width="1.05"/><circle cx="3.7" cy="3.9" r="10.8" fill="url(#ks)"/><ellipse cx="-0.25" cy="-0.1" rx="10.25" ry="9.9" fill="url(#kb)" stroke="#181824" stroke-width="0.8"/><circle cx="-0.2" cy="-0.1" r="5.8" fill="url(#kc)"/><path d="M-1.5 1.6 L1.5 1.6 L0.45 -5.6 L-0.45 -5.6 Z" fill="#fafafa" transform="rotate(-135)"/></svg>
<div class="fd" style="left:498px;top:645px;width:31px;height:14px"><span>0</span></div>
<svg class="kn" style="left:532.5px;top:610.5px" width="34" height="32" viewBox="-17 -15 34 32"><path d="M-14.5 14.4 L-11.5 10.3 A14.75 14.75 0 1 1 12.0 10.3 L14.4 14.4" fill="url(#kr)"/><path d="M-14.5 14.4 L-11.5 10.3 A14.75 14.75 0 1 1 12.0 10.3 L14.4 14.4" fill="none" stroke="#f8f8f8" stroke-width="1.05"/><circle cx="3.7" cy="3.9" r="10.8" fill="url(#ks)"/><ellipse cx="-0.25" cy="-0.1" rx="10.25" ry="9.9" fill="url(#kb)" stroke="#181824" stroke-width="0.8"/><circle cx="-0.2" cy="-0.1" r="5.8" fill="url(#kc)"/><path d="M-1.5 1.6 L1.5 1.6 L0.45 -5.6 L-0.45 -5.6 Z" fill="#fafafa" transform="rotate(-135)"/></svg>
<div class="fd" style="left:534px;top:645px;width:31px;height:14px"><span>0</span></div>
<svg class="ar" style="left:571px;top:596px" width="19" height="8" viewBox="0 0 19 8"><rect x="0" y="3" width="16" height="2" fill="#000"/><path d="M19.3 4 L13.8 1.1 L15 4 L13.8 6.9 Z" fill="#000"/></svg>
<svg class="xi" style="left:590px;top:530px" width="15" height="11" viewBox="0 0 15 11"><rect x="1.6" y="1.6" width="12" height="8" rx="1.8" fill="#5c5c66"/><rect x="0.6" y="0.6" width="11.8" height="7.8" rx="1.7" fill="url(#ib)" stroke="#060606" stroke-width="1.25"/><path d="M3.2 2.4 L9.8 6.6 M9.8 2.4 L3.2 6.6" stroke="#060606" stroke-width="1.65" fill="none"/></svg>
<div class="t" style="left:609.8px;top:530px;">DCA</div>
<div class="pn" style="left:590px;top:541px;width:221px;height:130px"></div>
<div class="cb" style="left:596px;top:547px"><svg width="12" height="12" viewBox="0 0 12 12"><path d="M2.6 2.6 L8.5 8.1 M8.5 2.6 L2.6 8.1" stroke="#0808b0" stroke-width="2.4" fill="none"/></svg></div>
<div class="t" style="left:611.7px;top:548px;">Enable</div>
<div class="env" style="left:596px;top:564px;width:211px;height:52px"><svg width="209" height="50" viewBox="0 0 209 50" style="position:absolute;left:0;top:0"><line x1="0" y1="45.599999999999994" x2="208" y2="45.599999999999994" stroke="#000" stroke-width="1.2"/><polyline points="2.9,45.6 17.4,11.6 25.6,11.6 53.4,20.4 75.5,20.4 104.5,45.6" fill="none" stroke="#000" stroke-width="1.1"/><rect x="14.6" y="8.8" width="5.6" height="5.6" fill="#8a8aa2" stroke="#000" stroke-width="1.1"/><rect x="22.8" y="8.8" width="5.6" height="5.6" fill="#8a8aa2" stroke="#000" stroke-width="1.1"/><rect x="50.6" y="17.6" width="5.6" height="5.6" fill="#8a8aa2" stroke="#000" stroke-width="1.1"/><rect x="101.7" y="42.8" width="5.6" height="5.6" fill="#8a8aa2" stroke="#000" stroke-width="1.1"/></svg></div>
<div class="hs" style="left:596px;top:620px;width:211px"><div class="sb l"><svg width="14" height="13" viewBox="0 0 14 13"><path d="M9.5 3 L3.5 6.5 L9.5 10 Z" fill="#f4f4f4" stroke="#c4c4c4" stroke-width="1"/></svg></div><div class="sb r"><svg width="14" height="13" viewBox="0 0 14 13"><path d="M4.5 3 L10.5 6.5 L4.5 10 Z" fill="#f4f4f4" stroke="#c4c4c4" stroke-width="1"/></svg></div><div class="zb"><svg width="13" height="13" viewBox="0 0 13 13"><circle cx="5.2" cy="5.2" r="2.5" fill="#dfe8f0" stroke="#000" stroke-width="1.4"/><path d="M7.2 7.2 L9.8 9.8" stroke="#000" stroke-width="1.8"/></svg></div></div>
<div class="t" style="left:595.4px;top:640px;">Vol</div>
<div class="fd" style="left:595px;top:653px;width:32px;height:14px"><span>100</span></div>
<div class="t" style="left:631.1999999999999px;top:640px;">Attack</div>
<div class="fd" style="left:631px;top:653px;width:32px;height:14px"><span>32</span></div>
<div class="t" style="left:667.1999999999999px;top:640px;">Hold</div>
<div class="fd" style="left:667px;top:653px;width:32px;height:14px"><span>17</span></div>
<div class="t" style="left:703.1999999999999px;top:640px;">Decay</div>
<div class="fd" style="left:703px;top:653px;width:32px;height:14px"><span>61</span></div>
<div class="t" style="left:739.1999999999999px;top:640px;">Sustain</div>
<div class="fd" style="left:739px;top:653px;width:32px;height:14px"><span>75</span></div>
<div class="t" style="left:775.1999999999999px;top:640px;">Relse</div>
<div class="fd" style="left:775px;top:653px;width:32px;height:14px"><span>64</span></div>
<svg class="ar" style="left:812px;top:596px" width="19" height="8" viewBox="0 0 19 8"><rect x="0" y="3" width="16" height="2" fill="#000"/><path d="M19.3 4 L13.8 1.1 L15 4 L13.8 6.9 Z" fill="#000"/></svg>
<svg class="xi" style="left:831px;top:567px" width="15" height="11" viewBox="0 0 15 11"><rect x="1.6" y="1.6" width="12" height="8" rx="1.8" fill="#5c5c66"/><rect x="0.6" y="0.6" width="11.8" height="7.8" rx="1.7" fill="url(#ib)" stroke="#060606" stroke-width="1.25"/><path d="M3.2 2.4 L9.8 6.6 M9.8 2.4 L3.2 6.6" stroke="#060606" stroke-width="1.65" fill="none"/></svg>
<div class="t" style="left:851.1px;top:567px;">Pan</div>
<div class="pn" style="left:831px;top:578px;width:41px;height:57px"></div>
<svg class="kn" style="left:834.5px;top:582.5px" width="34" height="32" viewBox="-17 -15 34 32"><path d="M-14.5 14.4 L-11.5 10.3 A14.75 14.75 0 1 1 12.0 10.3 L14.4 14.4" fill="url(#kr)"/><path d="M-14.5 14.4 L-11.5 10.3 A14.75 14.75 0 1 1 12.0 10.3 L14.4 14.4" fill="none" stroke="#f8f8f8" stroke-width="1.05"/><circle cx="3.7" cy="3.9" r="10.8" fill="url(#ks)"/><ellipse cx="-0.25" cy="-0.1" rx="10.25" ry="9.9" fill="url(#kb)" stroke="#181824" stroke-width="0.8"/><circle cx="-0.2" cy="-0.1" r="5.8" fill="url(#kc)"/><path d="M-1.5 1.6 L1.5 1.6 L0.45 -5.6 L-0.45 -5.6 Z" fill="#fafafa" transform="rotate(25)"/></svg>
<div class="fd" style="left:836px;top:617px;width:31px;height:14px"><span>1</span></div>
<svg class="xi" style="left:590px;top:348px" width="15" height="11" viewBox="0 0 15 11"><rect x="1.6" y="1.6" width="12" height="8" rx="1.8" fill="#5c5c66"/><rect x="0.6" y="0.6" width="11.8" height="7.8" rx="1.7" fill="url(#ib)" stroke="#060606" stroke-width="1.25"/><path d="M3.2 2.4 L9.8 6.6 M9.8 2.4 L3.2 6.6" stroke="#060606" stroke-width="1.65" fill="none"/></svg>
<div class="t" style="left:609.6px;top:348px;">Crossfade</div>
<div class="pn" style="left:590px;top:359px;width:159px;height:117px"></div>
<div class="t" style="left:594.4px;top:368px;">Mode</div>
<div class="dd" style="left:626px;top:364px;width:119px;height:15px"><span style="left:6.6px">Crossfade</span><svg class="da" width="5" height="3" viewBox="0 0 5 3"><path d="M0 0h5v1h-1v1h-1v1h-1v-1h-1v-1h-1z" fill="#4e4e4e"/></svg></div>
<div class="t" style="left:594.4px;top:388px;">Dir</div>
<div class="dd" style="left:626px;top:384px;width:119px;height:15px"><span style="left:6.6px">Primary-&gt;Secondary</span><svg class="da" width="5" height="3" viewBox="0 0 5 3"><path d="M0 0h5v1h-1v1h-1v1h-1v-1h-1v-1h-1z" fill="#4e4e4e"/></svg></div>
<div class="t" style="left:623.9px;top:411px;">Bal</div>
<div class="t" style="left:652.1px;top:411px;">Amount</div>
<div class="t" style="left:688.1px;top:411px;">Switch</div>
<svg class="kn" style="left:614.5px;top:423.6px" width="34" height="32" viewBox="-17 -15 34 32"><path d="M-14.5 14.4 L-11.5 10.3 A14.75 14.75 0 1 1 12.0 10.3 L14.4 14.4" fill="url(#kr)"/><path d="M-14.5 14.4 L-11.5 10.3 A14.75 14.75 0 1 1 12.0 10.3 L14.4 14.4" fill="none" stroke="#f8f8f8" stroke-width="1.05"/><circle cx="3.7" cy="3.9" r="10.8" fill="url(#ks)"/><ellipse cx="-0.25" cy="-0.1" rx="10.25" ry="9.9" fill="url(#kb)" stroke="#181824" stroke-width="0.8"/><circle cx="-0.2" cy="-0.1" r="5.8" fill="url(#kc)"/><path d="M-1.5 1.6 L1.5 1.6 L0.45 -5.6 L-0.45 -5.6 Z" fill="#fafafa" transform="rotate(0)"/></svg>
<div class="fd" style="left:616px;top:458px;width:31px;height:14px"><span>64</span></div>
<svg class="kn" style="left:650.5px;top:423.6px" width="34" height="32" viewBox="-17 -15 34 32"><path d="M-14.5 14.4 L-11.5 10.3 A14.75 14.75 0 1 1 12.0 10.3 L14.4 14.4" fill="url(#kr)"/><path d="M-14.5 14.4 L-11.5 10.3 A14.75 14.75 0 1 1 12.0 10.3 L14.4 14.4" fill="none" stroke="#f8f8f8" stroke-width="1.05"/><circle cx="3.7" cy="3.9" r="10.8" fill="url(#ks)"/><ellipse cx="-0.25" cy="-0.1" rx="10.25" ry="9.9" fill="url(#kb)" stroke="#181824" stroke-width="0.8"/><circle cx="-0.2" cy="-0.1" r="5.8" fill="url(#kc)"/><path d="M-1.5 1.6 L1.5 1.6 L0.45 -5.6 L-0.45 -5.6 Z" fill="#fafafa" transform="rotate(0)"/></svg>
<div class="fd" style="left:652px;top:458px;width:31px;height:14px"><span>128</span></div>
<svg class="kn" style="left:686.5px;top:423.6px" width="34" height="32" viewBox="-17 -15 34 32"><path d="M-14.5 14.4 L-11.5 10.3 A14.75 14.75 0 1 1 12.0 10.3 L14.4 14.4" fill="url(#kr)"/><path d="M-14.5 14.4 L-11.5 10.3 A14.75 14.75 0 1 1 12.0 10.3 L14.4 14.4" fill="none" stroke="#f8f8f8" stroke-width="1.05"/><circle cx="3.7" cy="3.9" r="10.8" fill="url(#ks)"/><ellipse cx="-0.25" cy="-0.1" rx="10.25" ry="9.9" fill="url(#kb)" stroke="#181824" stroke-width="0.8"/><circle cx="-0.2" cy="-0.1" r="5.8" fill="url(#kc)"/><path d="M-1.5 1.6 L1.5 1.6 L0.45 -5.6 L-0.45 -5.6 Z" fill="#fafafa" transform="rotate(0)"/></svg>
<div class="fd" style="left:688px;top:458px;width:31px;height:14px"><span>64</span></div>
</div>
<div id="vs"><div class="sa" style="left:0;top:0;border-bottom:1px solid #c0c0c0"><svg width="13" height="14" viewBox="0 0 13 14"><path d="M6.5 3 L10 10.5 L3 10.5 Z" fill="#f6f6f6" stroke="#c4c4c4" stroke-width="1"/></svg></div><div class="sa" style="left:0;bottom:0;border-top:1px solid #c0c0c0"><svg width="13" height="14" viewBox="0 0 13 14"><path d="M6.5 10.5 L10 3.5 L3 3.5 Z" fill="#f6f6f6" stroke="#c4c4c4" stroke-width="1"/></svg></div></div>
<div id="hsb"><div class="sa" style="left:0;top:0;border-right:1px solid #c0c0c0"><svg width="14" height="13" viewBox="0 0 14 13"><path d="M3 6.5 L10.5 3 L10.5 10 Z" fill="#f6f6f6" stroke="#c4c4c4" stroke-width="1"/></svg></div><div class="sa" style="right:0;top:0;border-left:1px solid #c0c0c0"><svg width="14" height="13" viewBox="0 0 14 13"><path d="M10.5 6.5 L3.5 3 L3.5 10 Z" fill="#f6f6f6" stroke="#c4c4c4" stroke-width="1"/></svg></div></div>
<div id="grip"><svg width="13" height="13" viewBox="0 0 13 13"><path d="M1 13 L13 1 M5 13 L13 5 M9 13 L13 9" stroke="#505050" stroke-width="1.5"/></svg></div>
</div>
</body></html>
